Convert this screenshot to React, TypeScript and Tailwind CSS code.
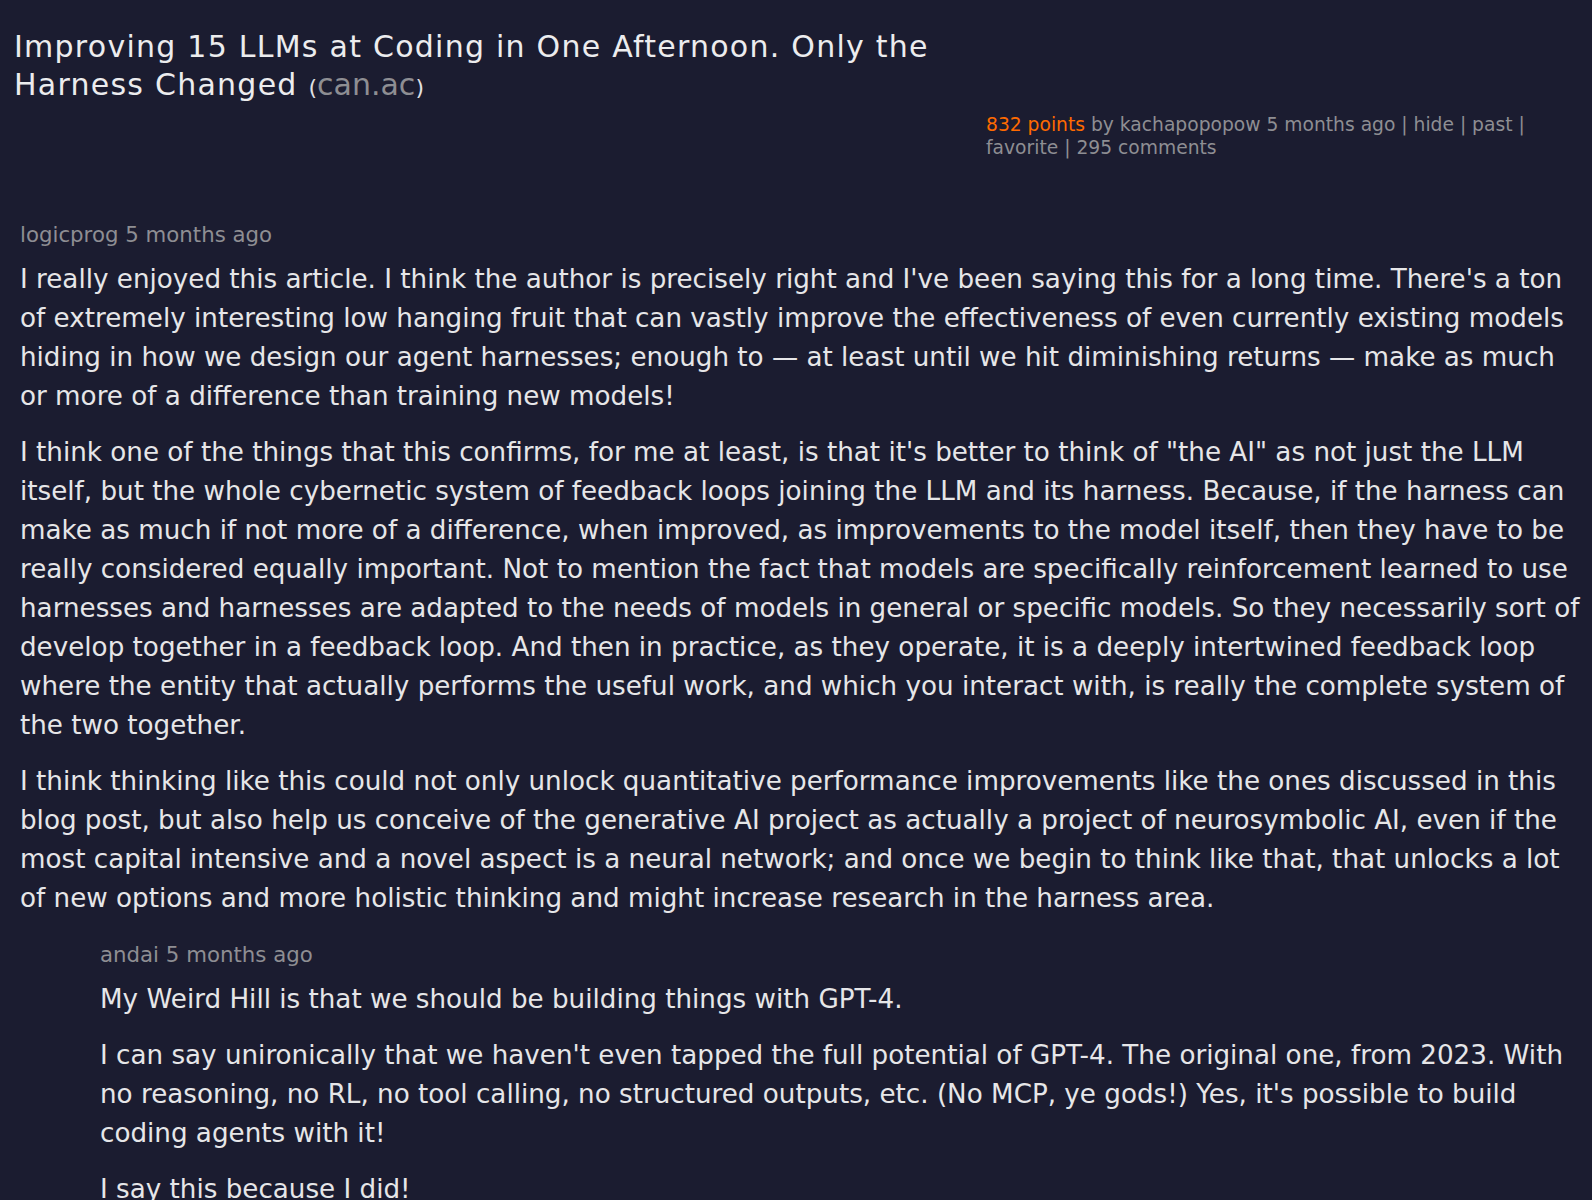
import React from "react";

type Comment = {
  user: string;
  age: string;
  paragraphs: string[];
  replies?: Comment[];
};

const STORY = {
  title: "Improving 15 LLMs at Coding in One Afternoon. Only the Harness Changed",
  site: "can.ac",
  points: 832,
  by: "kachapopopow",
  age: "5 months ago",
  comments: 295,
};

const THREAD: Comment[] = [
  {
    user: "logicprog",
    age: "5 months ago",
    paragraphs: [
      "I really enjoyed this article. I think the author is precisely right and I've been saying this for a long time. There's a ton of extremely interesting low hanging fruit that can vastly improve the effectiveness of even currently existing models hiding in how we design our agent harnesses; enough to — at least until we hit diminishing returns — make as much or more of a difference than training new models!",
      "I think one of the things that this confirms, for me at least, is that it's better to think of \"the AI\" as not just the LLM itself, but the whole cybernetic system of feedback loops joining the LLM and its harness. Because, if the harness can make as much if not more of a difference, when improved, as improvements to the model itself, then they have to be really considered equally important. Not to mention the fact that models are specifically reinforcement learned to use harnesses and harnesses are adapted to the needs of models in general or specific models. So they necessarily sort of develop together in a feedback loop. And then in practice, as they operate, it is a deeply intertwined feedback loop where the entity that actually performs the useful work, and which you interact with, is really the complete system of the two together.",
      "I think thinking like this could not only unlock quantitative performance improvements like the ones discussed in this blog post, but also help us conceive of the generative AI project as actually a project of neurosymbolic AI, even if the most capital intensive and a novel aspect is a neural network; and once we begin to think like that, that unlocks a lot of new options and more holistic thinking and might increase research in the harness area.",
    ],
    replies: [
      {
        user: "andai",
        age: "5 months ago",
        paragraphs: [
          "My Weird Hill is that we should be building things with GPT-4.",
          "I can say unironically that we haven't even tapped the full potential of GPT-4. The original one, from 2023. With no reasoning, no RL, no tool calling, no structured outputs, etc. (No MCP, ye gods!) Yes, it's possible to build coding agents with it!",
          "I say this because I did!",
        ],
      },
    ],
  },
];

function CommentBlock({ comment }: { comment: Comment }) {
  return (
    <div>
      <div className="text-[21.3px] leading-[24px] text-[#8e8e93]">
        {comment.user} {comment.age}
      </div>
      <div className="mt-[13px] space-y-[17px]">
        {comment.paragraphs.map((p, i) => (
          <p key={i} className="text-[26.2px] leading-[39px] text-[#e6e6e8]">
            {p}
          </p>
        ))}
      </div>
      {comment.replies?.map((r) => (
        <div key={r.user} className="mt-[25px] pl-[80px]">
          <CommentBlock comment={r} />
        </div>
      ))}
    </div>
  );
}

export default function App() {
  return (
    <div
      className="min-h-screen bg-[#1b1c30] text-[#e6e6e8]"
      style={{ fontFamily: '"DejaVu Sans", Verdana, sans-serif' }}
    >
      <header className="flex pl-[14px] pr-[20px] pt-[28px]">
        <h1 className="w-[950px] shrink-0 text-[30px] leading-[38px] tracking-[1.25px] text-[#ececee]">
          {STORY.title}{" "}
          <span className="text-[22px] tracking-normal text-[#e0e0e4]">(</span>
          <span className="text-[#8e8e93] tracking-normal">{STORY.site}</span>
          <span className="text-[22px] tracking-normal text-[#e0e0e4]">)</span>
        </h1>
        <div className="mt-[85px] ml-[22px] text-[18.7px] leading-[23px] text-[#8e8e93]">
          <span className="text-[#ff6a00]">{STORY.points} points</span> by {STORY.by}{" "}
          {STORY.age} | hide | past | favorite | {STORY.comments} comments
        </div>
      </header>

      <main className="pl-[20px] pr-[8px] pt-[64px] pb-10">
        {THREAD.map((c) => (
          <CommentBlock key={c.user} comment={c} />
        ))}
      </main>
    </div>
  );
}
